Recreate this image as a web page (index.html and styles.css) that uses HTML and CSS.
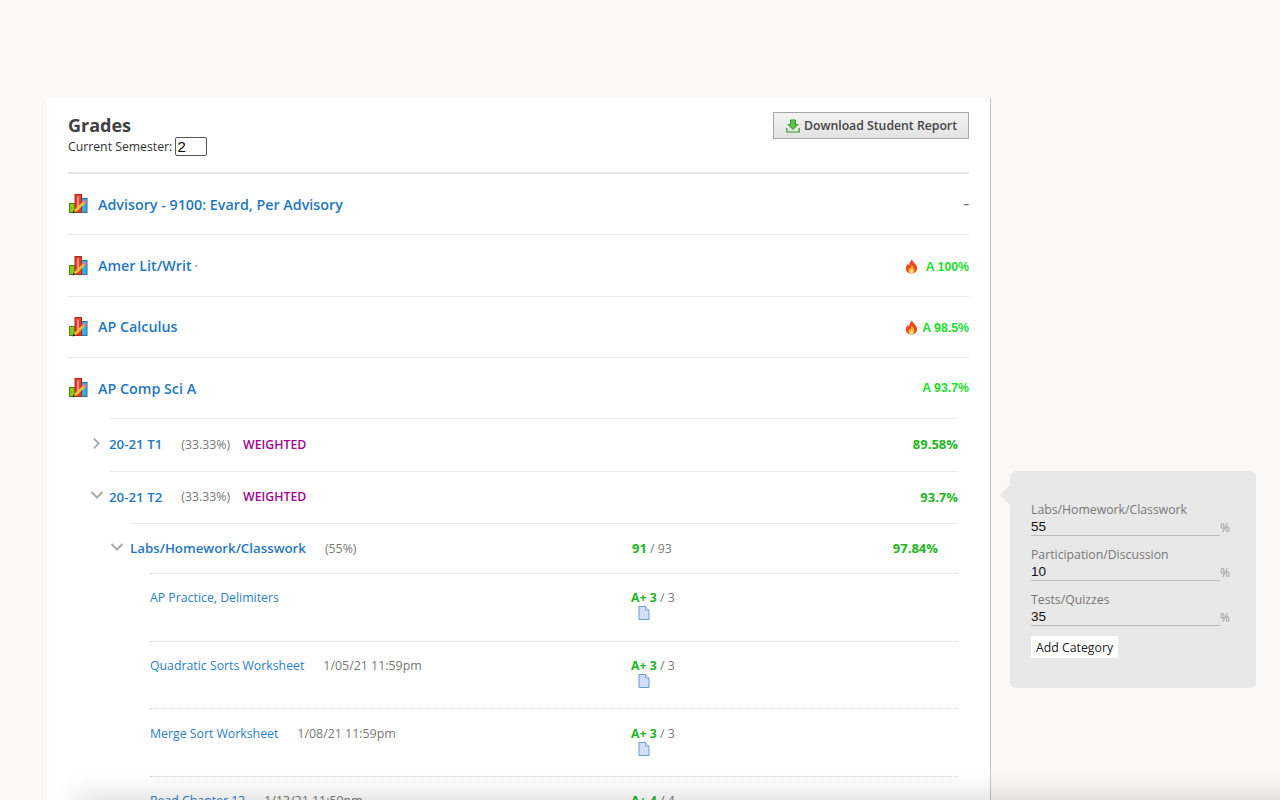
FILE: index.html
```html
<!DOCTYPE html>
<html lang="en">
<head>
<meta charset="utf-8">
<title>Grades</title>
<link rel="stylesheet" href="styles.css">
</head>
<body>
<svg class="defs" width="0" height="0" aria-hidden="true">
  <defs>
    <symbol id="gradebook" viewBox="0 0 20 20">
      <rect x="1.5" y="9.5" width="5.5" height="9" fill="#86c91e" stroke="#55801a" stroke-width="1"/>
      <rect x="13.5" y="4.5" width="5.5" height="14" fill="#39aee2" stroke="#256f98" stroke-width="1"/>
      <rect x="7" y=".5" width="6.5" height="18" fill="#ee3b24" stroke="#a82a1a" stroke-width="1"/>
      <rect x="9" y="2.5" width="2" height="13" fill="#f9907e"/>
      <path d="M6.5 17.5 L16.5 8" stroke="#f3bd3a" stroke-width="2.6" fill="none"/>
      <path d="M16 8.5 L18 6.5" stroke="#ee6fa8" stroke-width="2.8" fill="none"/>
      <path d="M4.5 19.5 L5.4 16.2 L7.8 18.6 Z" fill="#333"/>
    </symbol>
    <symbol id="flame" viewBox="0 0 14 16">
      <path d="M7.5 .5 C8 3 11 4.5 12.5 7.5 C14 11 12 15.5 7 15.5 C2.5 15.5 .3 12 1.2 8.5 C1.6 7 2.5 6 3 5 C3.6 6 3.8 6.6 4.5 7 C4.6 4.5 5.8 2 7.5 .5 Z" fill="#f0441c"/>
      <path d="M7.5 6 C8 8 10.5 9.5 10.3 12 C10.1 14.2 8.7 15.5 7 15.5 C5 15.5 3.5 14 3.7 12 C3.8 10.8 4.6 10 5.2 9.2 C5.6 9.8 5.8 10 6.2 10.2 C6.2 8.8 6.6 7.2 7.5 6 Z" fill="#fbb034"/>
      <path d="M7.2 10.5 C7.6 11.6 8.8 12.2 8.7 13.5 C8.6 14.7 7.8 15.5 7 15.5 C6 15.5 5.4 14.6 5.5 13.6 C5.6 12.5 6.8 11.8 7.2 10.5 Z" fill="#ffe98a"/>
    </symbol>
    <symbol id="doc" viewBox="0 0 12 14">
      <path d="M1 .5 H7.5 L11 4 V13.5 H1 Z" fill="#cfe0f8" stroke="#6b96d8" stroke-width="1"/>
      <path d="M7.5 .5 V4 H11" fill="#eef4fd" stroke="#6b96d8" stroke-width=".8"/>
    </symbol>
    <symbol id="chev-right" viewBox="0 0 10 14">
      <path d="M2 1.5 L7.5 7 L2 12.5" fill="none" stroke="#aaa" stroke-width="2"/>
    </symbol>
    <symbol id="chev-down" viewBox="0 0 14 10">
      <path d="M1.5 2 L7 7.5 L12.5 2" fill="none" stroke="#aaa" stroke-width="2"/>
    </symbol>
  </defs>
</svg>

<div class="page">
  <main class="panel">
    <header class="head">
      <div>
        <h1 class="title">Grades</h1>
        <label class="semester">Current Semester: <input class="semester-input" type="text" value="2"></label>
      </div>
      <button class="report-btn" type="button">
        <svg class="report-icon" viewBox="0 0 14 14" aria-hidden="true">
          <path d="M4.5 1 H9.5 V5.5 H12 L7 10.5 L2 5.5 H4.5 Z" fill="#62c04a" stroke="#2f9a22" stroke-width="1"/>
          <path d="M.8 9 V13 H13.2 V9" fill="none" stroke="#2f9a22" stroke-width="1.2"/>
        </svg>
        Download Student Report
      </button>
    </header>

    <section class="course course-first">
      <svg class="course-icon"><use href="#gradebook"/></svg>
      <a class="course-name">Advisory - 9100: Evard, Per Advisory</a>
      <span class="course-dash">–</span>
    </section>
    <section class="course">
      <svg class="course-icon"><use href="#gradebook"/></svg>
      <a class="course-name">Amer Lit/Writ <span class="dot">·</span></a>
      <span class="course-grade"><svg class="flame flame-wide"><use href="#flame"/></svg>A 100%</span>
    </section>
    <section class="course">
      <svg class="course-icon"><use href="#gradebook"/></svg>
      <a class="course-name">AP Calculus</a>
      <span class="course-grade"><svg class="flame"><use href="#flame"/></svg>A 98.5%</span>
    </section>
    <section class="course course-last">
      <svg class="course-icon"><use href="#gradebook"/></svg>
      <a class="course-name">AP Comp Sci A</a>
      <span class="course-grade">A 93.7%</span>
    </section>

    <section class="term">
      <svg class="chev-r"><use href="#chev-right"/></svg>
      <a class="term-name">20-21 T1</a>
      <span class="pct">(33.33%)</span>
      <span class="weighted">WEIGHTED</span>
      <span class="term-grade">89.58%</span>
    </section>
    <section class="term">
      <svg class="chev-d"><use href="#chev-down"/></svg>
      <a class="term-name">20-21 T2</a>
      <span class="pct">(33.33%)</span>
      <span class="weighted">WEIGHTED</span>
      <span class="term-grade">93.7%</span>
    </section>

    <section class="category">
      <svg class="chev-d"><use href="#chev-down"/></svg>
      <a class="cat-name">Labs/Homework/Classwork</a>
      <span class="cat-pct">(55%)</span>
      <span class="score"><b>91</b> / 93</span>
      <span class="cat-grade">97.84%</span>
    </section>

    <article class="item">
      <div class="item-main"><a class="item-name">AP Practice, Delimiters</a></div>
      <div class="item-score"><span class="score-line"><b>A+ 3</b> / 3</span><svg class="doc"><use href="#doc"/></svg></div>
    </article>
    <article class="item">
      <div class="item-main"><a class="item-name">Quadratic Sorts Worksheet</a><span class="item-date">1/05/21 11:59pm</span></div>
      <div class="item-score"><span class="score-line"><b>A+ 3</b> / 3</span><svg class="doc"><use href="#doc"/></svg></div>
    </article>
    <article class="item">
      <div class="item-main"><a class="item-name">Merge Sort Worksheet</a><span class="item-date">1/08/21 11:59pm</span></div>
      <div class="item-score"><span class="score-line"><b>A+ 3</b> / 3</span><svg class="doc"><use href="#doc"/></svg></div>
    </article>
    <article class="item">
      <div class="item-main"><a class="item-name">Read Chapter 13</a><span class="item-date">1/13/21 11:59pm</span></div>
      <div class="item-score"><span class="score-line"><b>A+ 4</b> / 4</span></div>
    </article>
  </main>

  <aside class="popover">
    <div class="field">
      <div class="field-label">Labs/Homework/Classwork</div>
      <div class="field-row"><span class="field-value">55</span><span class="field-unit">%</span></div>
    </div>
    <div class="field">
      <div class="field-label">Participation/Discussion</div>
      <div class="field-row"><span class="field-value">10</span><span class="field-unit">%</span></div>
    </div>
    <div class="field">
      <div class="field-label">Tests/Quizzes</div>
      <div class="field-row"><span class="field-value">35</span><span class="field-unit">%</span></div>
    </div>
    <button class="add-btn" type="button">Add Category</button>
  </aside>
</div>
<div class="bottom-shadow"></div>
</body>
</html>
```

FILE: styles.css
```css
* { box-sizing: border-box; }
html, body { margin: 0; height: 800px; overflow: hidden; }
body {
  background: #faf9f7;
  font-family: "Open Sans", "Noto Sans", sans-serif;
  color: #333;
  font-size: 12.3px;
}
.defs { position: absolute; }
a { color: #1f78bf; text-decoration: none; }

.page {
  display: flex;
  align-items: flex-start;
  padding: 98px 0 0 47px;
}
.panel {
  width: 944px;
  height: 800px;
  flex: none;
  background: #fff;
  border-right: 1px solid #c4c4c4;
  padding: 0 21px;
}

.head {
  display: flex;
  justify-content: space-between;
  align-items: flex-start;
  height: 76px;
  padding-top: 14px;
  border-bottom: 2px solid #e3e3e3;
}
.title {
  margin: 1px 0 0;
  font-size: 18px;
  line-height: 24px;
  font-weight: 700;
  color: #404040;
}
.semester { display: block; font-size: 12.25px; line-height: 20px; color: #333; }
.semester-input {
  width: 32px;
  height: 19px;
  margin: -2px 0 0 -1px;
  padding: 0 2px;
  border: 1px solid #555;
  border-radius: 2px;
  font: 15px "Liberation Sans", sans-serif;
  color: #000;
  background: #fff;
  vertical-align: middle;
}
.report-btn {
  display: flex;
  align-items: center;
  gap: 4px;
  width: 196px;
  height: 27px;
  padding: 0 0 0 12px;
  border: 1px solid #a8a8a8;
  background: linear-gradient(#f3f3f3, #e2e2e2);
  font: 600 12.25px "Open Sans", sans-serif;
  color: #444;
}
.report-icon { width: 14px; height: 14px; }

.course {
  display: flex;
  align-items: center;
  height: 61.4px;
  border-bottom: 1px solid #e8e8e8;
}
.course-first { padding-bottom: .4px; }
.course-last { height: 60px; border-bottom: 0; }
.course-icon { width: 20px; height: 20px; flex: none; margin-right: 10px; }
.course-name { font-size: 14.3px; font-weight: 600; }
.dot { font-weight: 400; color: #888; margin-left: -1px; }
.course-dash { margin: 0 0 3px auto; color: #6a6a6a; font-size: 11px; font-weight: 700; line-height: 16px; }
.course-grade {
  margin-left: auto;
  padding-top: 2px;
  display: flex;
  align-items: center;
  color: #16e02c;
  font: 700 12.3px "Liberation Sans", sans-serif;
}
.course-last .course-grade { padding: 0 0 1px; }
.flame { width: 13px; height: 15px; margin-right: 4px; }
.flame-wide { margin-right: 8px; }

.term {
  display: flex;
  align-items: center;
  height: 52.4px;
  margin: 0 11px 0 42px;
  padding-bottom: 1.5px;
  border-top: 1.5px solid #e8e8e8;
  position: relative;
}
.chev-r, .chev-d { position: absolute; }
.chev-r { width: 9px; height: 13px; left: -18px; top: 18px; }
.term .chev-d { width: 14px; height: 10px; left: -20px; top: 18.5px; }
.term-name { font-size: 13.3px; font-weight: 600; margin-left: -1px; }
.pct { margin-left: 19px; color: #777; font-size: 12.3px; }
.weighted { margin-left: 13px; color: #a0058e; font-size: 12.3px; font-weight: 600; }
.term-grade { margin-left: auto; color: #22b522; font-size: 13px; font-weight: 700; }

.category {
  display: flex;
  align-items: center;
  height: 50px;
  margin: 0 11px 0 62px;
  border-top: 1.5px solid #e8e8e8;
  position: relative;
}
.category .chev-d { width: 14px; height: 10px; left: -20px; top: 18.5px; }
.cat-name { font-size: 13.3px; font-weight: 600; }
.cat-pct { margin-left: 19px; color: #777; font-size: 12.3px; }
.score { position: absolute; left: 502px; top: 15px; color: #777; font-size: 12.3px; }
.score b { color: #22b522; font-size: 13px; }
.cat-grade { position: absolute; right: 20px; top: 15px; color: #22b522; font-size: 13px; font-weight: 700; }

.item {
  display: flex;
  height: 67.6px;
  margin: 0 11px 0 82px;
  padding-top: 15.5px;
  border-top: 1px dotted #d6d6d6;
}
.item-main { width: 481px; flex: none; }
.item-name { font-size: 12.3px; color: #2a80c4; }
.item-date { margin-left: 19px; font-size: 12.4px; color: #777; }
.item-score { display: flex; flex-direction: column; align-items: flex-start; }
.score-line { color: #777; font-size: 12.3px; line-height: 17px; }
.score-line b { color: #22b522; }
.doc { width: 12px; height: 14px; margin: 0 0 0 6.5px; }

.popover {
  position: relative;
  flex: none;
  width: 246px;
  height: 217.5px;
  margin: 372.5px 0 0 19px;
  padding: 31.5px 21px 0;
  background: #e8e8e8;
  border-radius: 6px;
}
.popover::before {
  content: "";
  position: absolute;
  left: -10px;
  top: 14.5px;
  width: 20px;
  height: 20px;
  background: #e8e8e8;
  clip-path: polygon(0 50%, 50% 0, 50% 100%);
}
.field { margin-bottom: 11px; }
.field-label { font-size: 12.25px; line-height: 16px; color: #777; }
.field-row { display: flex; align-items: flex-end; margin-top: 1px; }
.field-value {
  width: 189px;
  font: 13.5px/16px "Liberation Sans", sans-serif;
  color: #111;
  border-bottom: 1px solid #bbb;
}
.field-unit { font-size: 12px; color: #999; line-height: 17px; }
.add-btn {
  display: block;
  width: 87px;
  height: 22px;
  padding: 0;
  margin-top: -1px;
  border: 0;
  background: #fff;
  font: 12.3px "Open Sans", sans-serif;
  color: #222;
}

.bottom-shadow {
  position: fixed;
  left: 85px;
  top: 805px;
  width: 1300px;
  height: 20px;
  box-shadow: 0 0 30px 8px rgba(0, 0, 0, .16);
}
```
